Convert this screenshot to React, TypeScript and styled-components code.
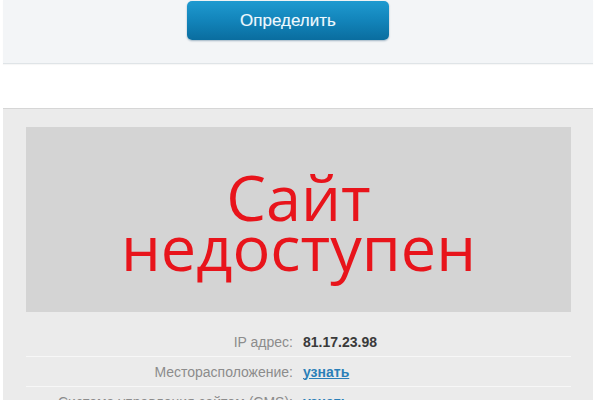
import React from "react";
import styled, { createGlobalStyle } from "styled-components";

const Global = createGlobalStyle`
  html, body { margin: 0; padding: 0; background: #ffffff; }
  body { font-family: "Liberation Sans", Arial, sans-serif; width: 600px; height: 400px; overflow: hidden; }
`;

const Page = styled.div`
  display: flex;
  flex-direction: column;
  padding: 0 7px 0 3px;
`;

const TopStrip = styled.div`
  background: #f3f5f7;
  border-bottom: 1px solid #dfe4e7;
  box-shadow: 0 1px 1px rgba(0, 0, 0, 0.03);
  padding-top: 1px;
  box-sizing: border-box;
  height: 64px;
`;

const DetectButton = styled.button`
  display: block;
  margin-left: 184px;
  width: 202px;
  height: 39px;
  border: none;
  border-radius: 5px;
  background: linear-gradient(to bottom, #1f9ad0 0%, #1284ba 50%, #0a6d9f 100%);
  box-shadow: 0 1px 2px rgba(0, 60, 100, 0.35);
  color: #eef8fd;
  font-family: "Liberation Sans", Arial, sans-serif;
  font-size: 17px;
  text-shadow: 0 0 1px rgba(255, 255, 255, 0.3);
  cursor: pointer;
`;

const Gap = styled.div`
  height: 44px;
`;

const Panel = styled.div`
  background: #ebebeb;
  border-top: 1px solid #d6d6d6;
  padding: 18px 22px 0 23px;
  height: 300px;
`;

const Screen = styled.div`
  height: 185px;
  background: #d4d4d4;
  display: flex;
  align-items: center;
  justify-content: center;
  padding-top: 5px;
  box-sizing: border-box;
`;

const Unavailable = styled.div`
  font-family: "Open Sans", sans-serif;
  font-size: 63px;
  line-height: 50px;
  color: #e8141b;
  text-align: center;
`;

const InfoList = styled.div`
  display: flex;
  flex-direction: column;
  margin-top: 15px;
`;

const InfoRow = styled.div<{ $last?: boolean }>`
  display: grid;
  grid-template-columns: 267px 1fr;
  column-gap: 10px;
  align-items: center;
  height: 29px;
  border-bottom: ${(p) => (p.$last ? "none" : "1px solid #f7f7f7")};
  font-size: 14px;
`;

const Label = styled.span`
  text-align: right;
  color: #8c8c8c;
  white-space: nowrap;
`;

const Value = styled.span`
  font-weight: bold;
  color: #3a3a3a;
`;

const Link = styled.a`
  font-weight: bold;
  color: #2a7fb8;
  text-decoration: underline;
  cursor: pointer;
`;

export default function App() {
  return (
    <>
      <Global />
      <Page>
        <TopStrip>
          <DetectButton>Определить</DetectButton>
        </TopStrip>
        <Gap />
        <Panel>
          <Screen>
            <Unavailable>
              Сайт
              <br />
              недоступен
            </Unavailable>
          </Screen>
          <InfoList>
            <InfoRow>
              <Label>IP адрес:</Label>
              <Value>81.17.23.98</Value>
            </InfoRow>
            <InfoRow>
              <Label>Месторасположение:</Label>
              <Link>узнать</Link>
            </InfoRow>
            <InfoRow $last>
              <Label>Система управления сайтом (CMS):</Label>
              <Link>узнать</Link>
            </InfoRow>
          </InfoList>
        </Panel>
      </Page>
    </>
  );
}
